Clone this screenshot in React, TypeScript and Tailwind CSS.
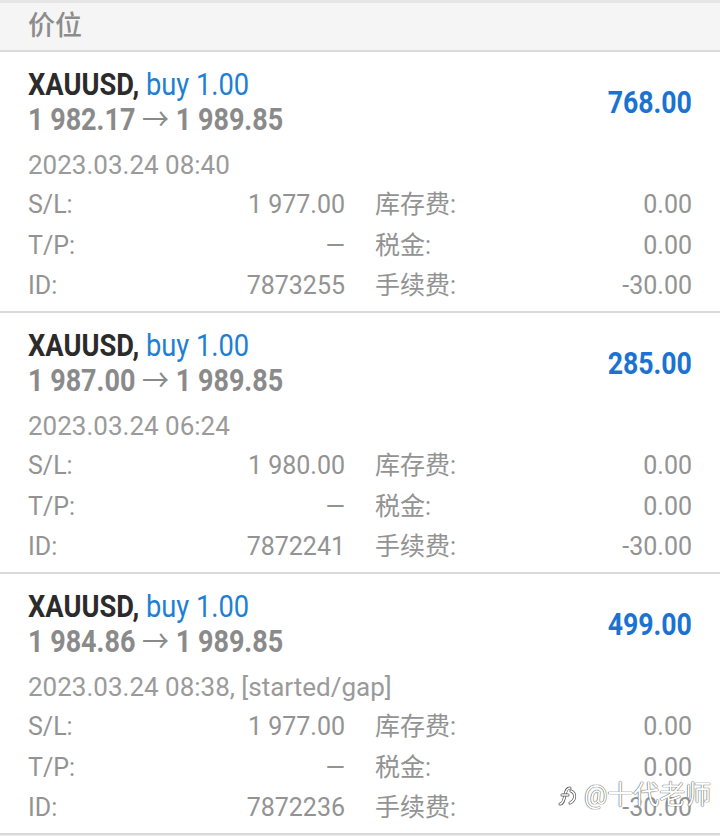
import React from 'react';

type Deal = {
  symbol: string;
  side: string;
  open: string;
  close: string;
  profit: string;
  time: string;
  sl: string;
  tp: string;
  id: string;
  swap: string;
  tax: string;
  fee: string;
};

const deals: Deal[] = [
  { symbol: 'XAUUSD', side: 'buy 1.00', open: '1 982.17', close: '1 989.85', profit: '768.00', time: '2023.03.24 08:40', sl: '1 977.00', tp: '—', id: '7873255', swap: '0.00', tax: '0.00', fee: '-30.00' },
  { symbol: 'XAUUSD', side: 'buy 1.00', open: '1 987.00', close: '1 989.85', profit: '285.00', time: '2023.03.24 06:24', sl: '1 980.00', tp: '—', id: '7872241', swap: '0.00', tax: '0.00', fee: '-30.00' },
  { symbol: 'XAUUSD', side: 'buy 1.00', open: '1 984.86', close: '1 989.85', profit: '499.00', time: '2023.03.24 08:38, [started/gap]', sl: '1 977.00', tp: '—', id: '7872236', swap: '0.00', tax: '0.00', fee: '-30.00' },
];

const Cell: React.FC<{ label: string; value: string }> = ({ label, value }) => (
  <div className="flex justify-between items-center">
    <span>{label}</span>
    <span>{value}</span>
  </div>
);

const DealCard: React.FC<{ deal: Deal }> = ({ deal }) => (
  <div className="bg-white px-[28px] pt-[15px] pb-[4.5px]">
    <div className="flex items-center justify-between">
      <div className="flex flex-col">
        <div className="h-[35px] leading-[35px] text-[31px]">
          <span className="inline-block origin-left scale-x-[0.88] whitespace-nowrap">
            <span className="font-bold text-[#2b2b2b]">{deal.symbol},</span>{' '}
            <span className="text-[#1f7fd3]">{deal.side}</span>
          </span>
        </div>
        <div className="h-[35px] leading-[35px] text-[31px] font-bold text-[#8a8a8a]">
          <span className="inline-block origin-left scale-x-[0.87] whitespace-nowrap">
            {deal.open} <span className="font-normal">→</span> {deal.close}
          </span>
        </div>
      </div>
      <div className="h-[35px] leading-[35px] text-[31px] font-bold text-[#1a73d1]">
        <span className="inline-block origin-right scale-x-[0.86]">{deal.profit}</span>
      </div>
    </div>
    <div className="mt-[8px] h-[40px] leading-[40px] text-[26px] text-[#9a9a9a]">{deal.time}</div>
    <div className="grid grid-cols-2 gap-x-[30px] text-[25px] leading-[40.5px] text-[#939393]">
      <Cell label="S/L:" value={deal.sl} />
      <Cell label="库存费:" value={deal.swap} />
      <Cell label="T/P:" value={deal.tp} />
      <Cell label="税金:" value={deal.tax} />
      <Cell label="ID:" value={deal.id} />
      <Cell label="手续费:" value={deal.fee} />
    </div>
  </div>
);

const App: React.FC = () => {
  return (
    <div
      className="relative w-[720px] h-[836px] overflow-hidden bg-[#ececec]"
      style={{ fontFamily: 'Roboto, "Noto Sans CJK SC", sans-serif' }}
    >
      <div className="h-[52px] bg-[#f5f5f5] border-t-[3px] border-[#e6e6e6] border-b-2 border-b-[#dcdcdc] flex items-center px-[28px]">
        <span className="text-[27px] font-medium text-[#8c8c8c]">价位</span>
      </div>

      {deals.map((d, i) => (
        <div key={i}>
          <DealCard deal={d} />
          <div className="h-[2px] bg-[#dadada]" />
        </div>
      ))}

      {/* watermark */}
      <div className="absolute left-[556px] top-[776px] flex items-center gap-[4px] text-white text-[26px] [text-shadow:0_0_1px_#444,0_0_1px_#444]">
        <svg width="24" height="24" viewBox="0 0 24 24" fill="none">
          <path d="M4 20 C7 20 8 16 9 11 C10 6 11 4 14 4" stroke="#555" strokeWidth="3" strokeLinecap="round" />
          <path d="M4 20 C7 20 8 16 9 11 C10 6 11 4 14 4" stroke="#fff" strokeWidth="1.6" strokeLinecap="round" />
          <path d="M6 11 H12" stroke="#555" strokeWidth="3" strokeLinecap="round" />
          <path d="M6 11 H12" stroke="#fff" strokeWidth="1.6" strokeLinecap="round" />
          <path d="M15 7 C20 9 20 16 14 19" stroke="#555" strokeWidth="3" strokeLinecap="round" />
          <path d="M15 7 C20 9 20 16 14 19" stroke="#fff" strokeWidth="1.6" strokeLinecap="round" />
        </svg>
        <span>@十代老师</span>
      </div>
    </div>
  );
};

export default App;
